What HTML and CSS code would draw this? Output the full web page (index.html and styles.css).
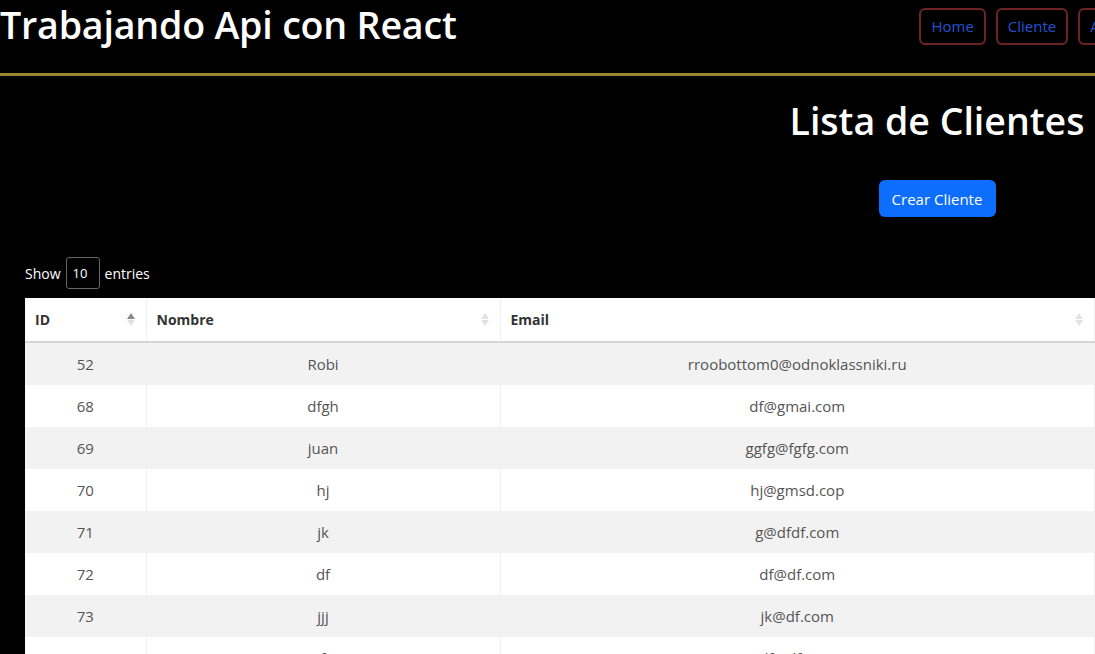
FILE: index.html
```html
<!DOCTYPE html>
<html lang="es">
<head>
<meta charset="utf-8">
<title>Trabajando Api con React</title>
<link rel="stylesheet" href="styles.css">
</head>
<body>
<div class="page">
  <header class="topbar">
    <h1 class="brand">Trabajando Api con React</h1>
    <nav class="nav">
      <a class="nav-btn" href="#">Home</a>
      <a class="nav-btn" href="#">Cliente</a>
      <a class="nav-btn" href="#">Acerca</a>
    </nav>
  </header>
  <section class="hero">
    <h2 class="hero-title">Lista de Clientes</h2>
    <button class="btn-primary">Crear Cliente</button>
  </section>
  <div class="dt-length">
    <span>Show</span>
    <span class="dt-select">10</span>
    <span>entries</span>
  </div>
  <table class="dt">
    <colgroup><col class="c-id"><col class="c-name"><col class="c-email"></colgroup>
    <thead>
      <tr>
        <th>ID<span class="sort"><i class="up dark"></i><i class="down"></i></span></th>
        <th>Nombre<span class="sort"><i class="up"></i><i class="down"></i></span></th>
        <th>Email<span class="sort"><i class="up"></i><i class="down"></i></span></th>
      </tr>
    </thead>
    <tbody>
      <tr><td>52</td><td>Robi</td><td>rroobottom0@odnoklassniki.ru</td></tr>
      <tr><td>68</td><td>dfgh</td><td>df@gmai.com</td></tr>
      <tr><td>69</td><td>juan</td><td>ggfg@fgfg.com</td></tr>
      <tr><td>70</td><td>hj</td><td>hj@gmsd.cop</td></tr>
      <tr><td>71</td><td>jk</td><td>g@dfdf.com</td></tr>
      <tr><td>72</td><td>df</td><td>df@df.com</td></tr>
      <tr><td>73</td><td>jjj</td><td>jk@df.com</td></tr>
      <tr><td>75</td><td>f</td><td>df@df.com</td></tr>
    </tbody>
  </table>
</div>
</body>
</html>
```
FILE: styles.css
```css
html, body {
  margin: 0;
  padding: 0;
  background: #000;
  overflow: hidden;
}
body {
  font-family: "Open Sans", "Noto Sans", sans-serif;
  color: #fff;
}
.page {
  width: 1170px;
}
.topbar {
  display: flex;
  align-items: flex-start;
  justify-content: space-between;
  height: 73px;
  border-bottom: 3px solid #9c8631;
}
.brand {
  margin: 0;
  font-size: 37.6px;
  font-weight: 600;
  line-height: 50px;
  letter-spacing: -0.2px;
}
.nav {
  display: flex;
  gap: 10px;
  margin-top: 8px;
  padding-right: 21px;
}
.nav-btn {
  display: block;
  box-sizing: border-box;
  height: 37px;
  line-height: 33px;
  padding: 0 10px;
  border: 2px solid #6e2424;
  border-radius: 6px;
  color: #2452d6;
  font-size: 15px;
  text-decoration: none;
}
.hero {
  width: 1874px;
  text-align: center;
  padding-top: 22px;
}
.hero-title {
  margin: 0;
  font-size: 37.5px;
  font-weight: 600;
  line-height: 46px;
}
.btn-primary {
  margin-top: 36px;
  width: 117px;
  height: 37px;
  border: 0;
  border-radius: 6px;
  background: #0d6efd;
  color: #fff;
  font-family: inherit;
  font-size: 15px;
}
.dt-length {
  display: flex;
  align-items: center;
  gap: 5px;
  margin: 40px 0 9px 25px;
  font-size: 14px;
  height: 32px;
}
.dt-select {
  box-sizing: border-box;
  width: 34px;
  height: 32px;
  line-height: 30px;
  padding-left: 6px;
  border: 1px solid #666;
  border-radius: 3px;
  font-size: 13px;
}
.dt {
  margin-left: 25px;
  width: 1070px;
  border-collapse: collapse;
  background: #fff;
  table-layout: fixed;
  font-size: 15px;
}
.c-id { width: 121px; }
.c-name { width: 354px; }
.dt th {
  position: relative;
  height: 43px;
  padding: 0 10px;
  text-align: left;
  font-weight: 700;
  font-size: 14px;
  color: #333;
  border-bottom: 2px solid #d6d6d6;
  border-right: 1px solid #f0f0f0;
}
.sort {
  position: absolute;
  right: 11px;
  top: 15px;
  display: flex;
  flex-direction: column;
  gap: 1px;
}
.sort i {
  display: block;
  width: 0;
  height: 0;
  border-left: 4px solid transparent;
  border-right: 4px solid transparent;
}
.sort .up { border-bottom: 6px solid #e2e2e2; }
.sort .down { border-top: 6px solid #e2e2e2; }
.sort .up.dark { border-bottom-color: #888; }
.dt td {
  height: 42px;
  padding: 0 10px;
  text-align: center;
  color: #555;
  border-right: 1px solid #f0f0f0;
}
.dt tbody tr:nth-child(odd) td {
  background: #f2f2f2;
}
```
